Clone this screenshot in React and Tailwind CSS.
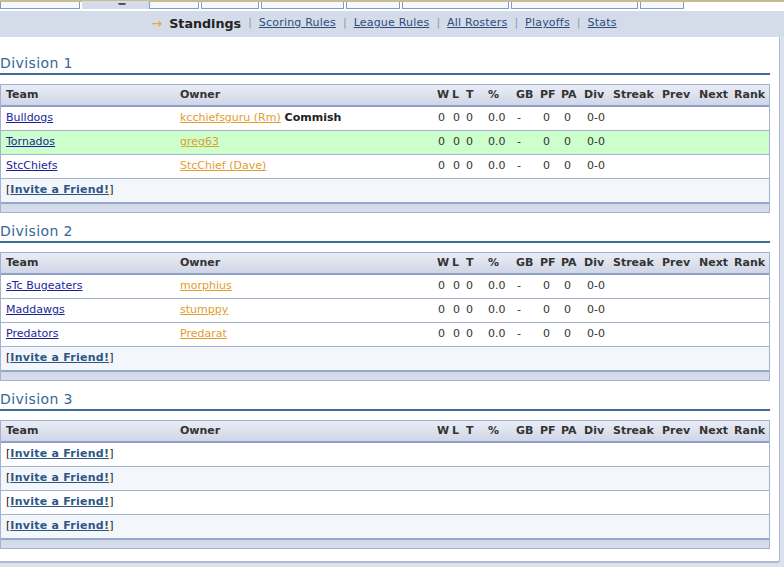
import React from 'react';

const cols =
  'grid grid-cols-[174px_257px_15px_14px_22px_28px_24px_21px_23px_29px_49px_37px_35px_40px]';

const headers = ['Team', 'Owner', 'W', 'L', 'T', '%', 'GB', 'PF', 'PA', 'Div', 'Streak', 'Prev', 'Next', 'Rank'];

const statVals = ['0', '0', '0', '0.0', '-', '0', '0', '0-0'];
const statPad = ['pl-[6px]', 'pl-[6px]', 'pl-[5px]', 'pl-[5px]', 'pl-[6px]', 'pl-[8px]', 'pl-[8px]', 'pl-[8px]'];

const divisions = [
  {
    name: 'Division 1',
    teams: [
      { team: 'Bulldogs', owner: 'kcchiefsguru (Rm)', commish: true },
      { team: 'Tornados', owner: 'greg63', mine: true },
      { team: 'StcChiefs', owner: 'StcChief (Dave)' },
    ],
    invites: 1,
  },
  {
    name: 'Division 2',
    teams: [
      { team: 'sTc Bugeaters', owner: 'morphius' },
      { team: 'Maddawgs', owner: 'stumppy' },
      { team: 'Predators', owner: 'Predarat' },
    ],
    invites: 1,
  },
  { name: 'Division 3', teams: [], invites: 4 },
];

const tabs = [
  { w: 'w-[80px]' },
  { w: 'w-[67px]', active: true },
  { w: 'w-[50px]' },
  { w: 'w-[58px]' },
  { w: 'w-[83px]' },
  { w: 'w-[54px]' },
  { w: 'w-[107px]' },
  { w: 'w-[127px]' },
  { w: 'w-[44px]' },
];

const navLinks = ['Scoring Rules', 'League Rules', 'All Rosters', 'Playoffs', 'Stats'];

function InviteRow({ last, shade }) {
  return (
    <div
      className={`flex items-center pl-[5px] ${shade ? 'bg-[#f3f6fb]' : 'bg-white'} ${
        last ? 'h-[25px] border-b-2 border-[#95a7ca]' : 'h-[24px] border-b border-[#a3b2cf]'
      }`}
    >
      <span className="text-[#222]">
        [<a className="underline font-bold text-[#2d5684] tracking-[0.25px]">Invite a Friend!</a>]
      </span>
    </div>
  );
}

function Division({ div, first }) {
  const total = div.teams.length + div.invites;
  return (
    <section className="w-[770px]">
      <div className={`${first ? 'h-[36px]' : 'h-[28px]'} flex items-end border-b-2 border-[#3d6b9a] box-content`}>
        <h2 className="text-[14px] leading-[17px] pb-[1px] tracking-[0.4px] text-[#35679a] font-normal">
          {div.name}
        </h2>
      </div>
      <div className="mt-[9px] border border-[#a3b2cf] border-b-0">
        <div
          className={`${cols} h-[22px] items-center bg-gradient-to-b from-[#eaedf5] to-[#cfd6e6] border-b-2 border-[#8fa1c9] font-bold text-[#333]`}
        >
          {headers.map((h) => (
            <div key={h} className="pl-[5px] whitespace-nowrap">
              {h}
            </div>
          ))}
        </div>
        {div.teams.map((t) => (
          <div
            key={t.team}
            className={`${cols} h-[24px] items-center border-b border-[#a3b2cf] ${
              t.mine ? 'bg-[#ccffcc]' : 'bg-white'
            }`}
          >
            <div className="pl-[5px] whitespace-nowrap">
              <a className="underline text-[#1c1f9c]">{t.team}</a>
            </div>
            <div className="pl-[5px] whitespace-nowrap">
              <a className="underline text-[#e39c2e]">{t.owner}</a>
              {t.commish && <span className="font-bold text-[#222]"> Commish</span>}
            </div>
            {statVals.map((v, j) => (
              <div key={j} className={`${statPad[j]} whitespace-nowrap text-[#333]`}>
                {v}
              </div>
            ))}
            <div />
            <div />
            <div />
            <div />
          </div>
        ))}
        {Array.from({ length: div.invites }).map((_, i) => {
          const idx = div.teams.length + i;
          return <InviteRow key={i} last={idx === total - 1} shade={idx % 2 === 1} />;
        })}
        <div className="h-[9px] bg-gradient-to-b from-[#d2d9e8] to-[#d8deeb] border-b border-[#a3b2cf]" />
      </div>
    </section>
  );
}

export default function App() {
  return (
    <div className="w-[784px] h-[567px] overflow-hidden bg-[#dce2ed] font-['DejaVu_Sans',Verdana,sans-serif] text-[11px] text-[#333]">
      {/* tab strip */}
      <div className="h-[9px] flex bg-white border-t-2 border-[#c9ba92] box-content -mb-[2px] relative">
        {tabs.map((t, i) =>
          t.active ? (
            <div key={i} className={`${t.w} h-[9px] -mt-[2px] bg-[#d5dce9] border-t border-[#c9ba92] flex`}>
              <div className="ml-[36px] mt-[2px] w-[8px] h-[2px] rounded-b-[2px] bg-[#555]" />
            </div>
          ) : (
            <div key={i} className={`${t.w} h-[7px] bg-[#f5f8fd] border-x border-b border-[#7f9ec9] mr-[2px]`} />
          )
        )}
      </div>

      {/* sub nav */}
      <div className="h-[28px] pt-[1px] pr-[16px] bg-[#d5dce9] flex items-center justify-center">
        <span className="text-[#f0a020] text-[13px] mr-[7px]">→</span>
        <span className="font-bold text-[12.7px] text-[#222]">Standings</span>
        {navLinks.map((l) => (
          <React.Fragment key={l}>
            <span className="px-[7px] text-[#8797b5]">|</span>
            <a className="underline text-[#2c4d7c] tracking-[0.2px]">{l}</a>
          </React.Fragment>
        ))}
      </div>

      {/* content panel */}
      <div className="w-[780px] h-[526px] bg-white border-r border-b-2 border-[#a9bbd8] rounded-br-[3px]">
        {divisions.map((d, i) => (
          <Division key={d.name} div={d} first={i === 0} />
        ))}
      </div>
    </div>
  );
}
